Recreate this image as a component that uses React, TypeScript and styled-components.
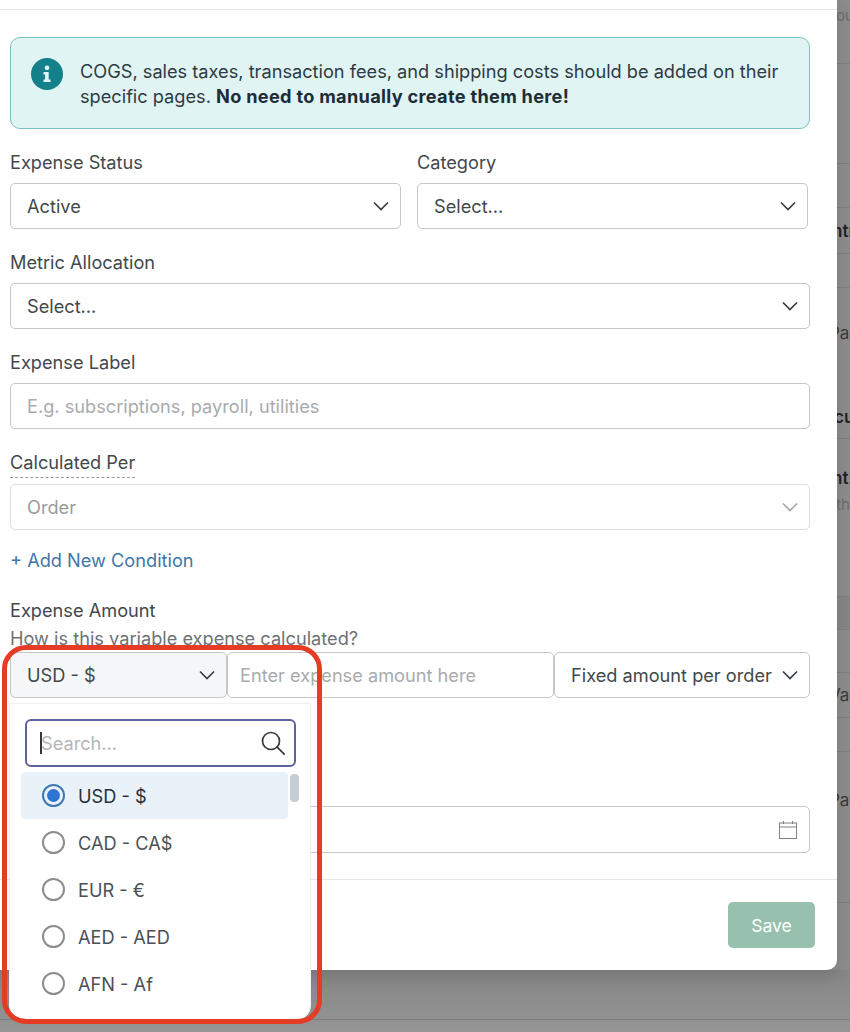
import React from "react";
import styled, { createGlobalStyle } from "styled-components";

const GlobalStyle = createGlobalStyle`
  html, body {
    margin: 0;
    padding: 0;
    background: #8f8f8f;
  }
  * {
    box-sizing: border-box;
  }
`;

const Page = styled.div`
  width: 850px;
  height: 1032px;
  overflow: hidden;
  position: relative;
  display: flex;
  flex-direction: column;
  font-family: Inter, "Liberation Sans", sans-serif;
  font-size: 18.2px;
  color: #42484c;
  background: #8f8f8f;
`;

const TopArea = styled.div`
  display: flex;
  height: 970px;
`;

const Modal = styled.div`
  width: 837px;
  flex: none;
  background: #fff;
  border-bottom-right-radius: 10px;
  box-shadow: 0 6px 16px rgba(0, 0, 0, 0.12);
  display: flex;
  flex-direction: column;
  position: relative;
  z-index: 1;
`;

const ModalHeader = styled.div`
  height: 10px;
  flex: none;
  border-bottom: 1px solid #e4e6e8;
`;

const ModalBody = styled.div`
  flex: 1;
  padding: 27px 27px 0 10px;
  display: flex;
  flex-direction: column;
  border-bottom: 1px solid #e4e6e8;
`;

const ModalFooter = styled.div`
  height: 90px;
  flex: none;
  display: flex;
  justify-content: flex-end;
  padding: 22px 22px 0 0;
`;

const SaveButton = styled.button`
  width: 87px;
  height: 46px;
  border: none;
  border-radius: 5px;
  background: #97c1ae;
  color: #fff;
  font: inherit;
  font-size: 17.5px;
`;

const Banner = styled.div`
  height: 92px;
  border: 1px solid #7dc0c1;
  border-radius: 10px;
  background: #e0f4f3;
  display: flex;
  align-items: flex-start;
  gap: 17px;
  padding: 21px 20px 0;
  line-height: 25px;
  color: #2d3a44;
`;

const BannerIcon = styled.svg`
  flex: none;
  width: 32px;
  height: 32px;
  margin-top: -1px;
`;

const BannerStrong = styled.strong`
  font-weight: 700;
  letter-spacing: 0.29px;
  color: #1e2c38;
`;

const TwoColumns = styled.div`
  display: grid;
  grid-template-columns: 391px 391px;
  gap: 16px;
  margin-top: 22px;
`;

const Field = styled.div<{ $top?: number }>`
  display: flex;
  flex-direction: column;
  margin-top: ${(p) => p.$top ?? 0}px;
`;

const Label = styled.label`
  height: 24px;
  line-height: 22px;
  margin-bottom: 8px;
`;

const TipLabel = styled.label`
  align-self: flex-start;
  height: 28px;
  line-height: 24px;
  margin-bottom: 6px;
  border-bottom: 1px dashed #9a9a9a;
`;

const Box = styled.div<{ $disabled?: boolean; $grey?: boolean }>`
  height: 46px;
  border: 1px solid ${(p) => (p.$disabled ? "#dcdedf" : "#c4c6c8")};
  border-radius: 5px;
  padding: 0 9px 0 16px;
  display: flex;
  align-items: center;
  justify-content: space-between;
  white-space: nowrap;
  background: ${(p) => (p.$grey ? "#f5f6f8" : "#fff")};
  color: ${(p) => (p.$disabled ? "#9a9c9e" : "inherit")};
`;

const AmountInput = styled(Box)`
  padding-left: 12px;
`;

const Placeholder = styled.span`
  color: #a9abad;
`;

const Chevron = styled.svg<{ $faded?: boolean }>`
  flex: none;
  width: 20px;
  height: 20px;
  fill: none;
  stroke: ${(p) => (p.$faded ? "#a4a6a8" : "#383e42")};
  stroke-width: 1.7;
`;

const AddLink = styled.a`
  margin-top: 18px;
  height: 25px;
  line-height: 25px;
  color: #3f76a8;
`;

const AmountTitle = styled.div`
  margin-top: 25px;
  height: 24px;
  line-height: 24px;
`;

const AmountHint = styled.div`
  height: 24px;
  line-height: 24px;
  margin-top: 4px;
  margin-bottom: 2px;
  color: #6d7276;
`;

const AmountRow = styled.div`
  display: grid;
  grid-template-columns: 217px 327px 256px;
  height: 46px;
`;

const DateBox = styled(Box)`
  margin-top: 108px;
  justify-content: flex-end;
  padding-right: 11px;
  height: 47px;
`;

const CalendarIcon = styled.svg`
  width: 20px;
  height: 20px;
  fill: none;
  stroke: #808284;
  stroke-width: 1;
`;

const Menu = styled.div`
  position: absolute;
  left: 9px;
  top: 703px;
  width: 302px;
  height: 317px;
  background: #fff;
  border: 1px solid #f0f1f2;
  border-radius: 0 0 14px 14px;
  z-index: 2;
  padding: 15px 0 0 11px;
`;

const SearchBox = styled.div`
  width: 271px;
  height: 48px;
  margin-left: 4px;
  border: 2px solid #5c639f;
  border-radius: 6px;
  display: flex;
  align-items: center;
  padding: 0 8px 0 13px;
`;

const Caret = styled.span`
  width: 2px;
  height: 22px;
  background: #33383c;
  flex: none;
`;

const SearchHint = styled.span`
  flex: 1;
  margin-left: -1px;
  color: #b4b6b8;
`;

const SearchIcon = styled.svg`
  width: 26px;
  height: 26px;
  fill: none;
  stroke: #33383c;
  stroke-width: 1.7;
  stroke-linecap: round;
`;

const OptionList = styled.div`
  margin-top: 5px;
  position: relative;
`;

const Option = styled.div<{ $active?: boolean }>`
  width: 267px;
  height: 47px;
  display: flex;
  align-items: center;
  gap: 13px;
  padding-left: 21px;
  border-radius: 4px;
  background: ${(p) => (p.$active ? "#eaf2f9" : "transparent")};
  color: ${(p) => (p.$active ? "#283038" : "#4b5054")};
`;

const Radio = styled.span<{ $active?: boolean }>`
  width: 23px;
  height: 23px;
  flex: none;
  border-radius: 50%;
  border: 2px solid ${(p) => (p.$active ? "#3f78b4" : "#8b8d8f")};
  display: flex;
  align-items: center;
  justify-content: center;

  &::after {
    content: "";
    width: 13px;
    height: 13px;
    border-radius: 50%;
    background: ${(p) => (p.$active ? "#2f74d0" : "transparent")};
  }
`;

const ScrollThumb = styled.div`
  position: absolute;
  right: 11px;
  top: 2px;
  width: 9px;
  height: 28px;
  border-radius: 4px;
  background: #c5cdd6;
`;

const Annotation = styled.div`
  position: absolute;
  left: 2px;
  top: 645px;
  width: 320px;
  height: 379px;
  border: 5px solid #e63b24;
  border-radius: 24px;
  z-index: 3;
  pointer-events: none;
`;

const Strip = styled.div`
  flex: 1;
  overflow: hidden;
  display: flex;
  flex-direction: column;
  background: #8c8c8c;
`;

const StripRow = styled.div<{ $h: number; $line?: boolean; $tone?: boolean }>`
  height: ${(p) => p.$h}px;
  flex: none;
  display: flex;
  align-items: center;
  border-bottom: ${(p) => (p.$line ? "1px solid #7e7e7e" : "none")};
  background: ${(p) => (p.$tone ? "#868686" : "transparent")};
  white-space: nowrap;
`;

const StripText = styled.span<{ $shift: number; $bold?: boolean; $faint?: boolean }>`
  margin-left: ${(p) => p.$shift}px;
  font-weight: ${(p) => (p.$bold ? 600 : 400)};
  color: ${(p) => (p.$bold ? "#222" : p.$faint ? "#6b6b6b" : "#3a3a3a")};
  font-size: ${(p) => (p.$faint ? 15 : 17)}px;
`;

const BottomArea = styled.div`
  flex: 1;
  display: flex;
  flex-direction: column;
  background: linear-gradient(#858585, #959595);
`;

const BottomLine = styled.div`
  margin-top: 49px;
  height: 1px;
  flex: none;
  background: #7d7d7d;
`;

const stripRows = [
  { h: 30, text: "ou", shift: -1, faint: true },
  { h: 34, line: true },
  { h: 100, line: true },
  { h: 44, line: true },
  { h: 46, text: "ntr", shift: -5, bold: true, line: true },
  { h: 34, line: true },
  { h: 90, text: "Pa", shift: -8 },
  { h: 17 },
  { h: 44, text: "cu", shift: -3, bold: true, line: true },
  { h: 26 },
  { h: 26, text: "nt", shift: -5, bold: true },
  { h: 26, text: "th", shift: -1, faint: true },
  { h: 80, line: true },
  { h: 33, line: true, tone: true },
  { h: 43, line: true },
  { h: 45, text: "Va", shift: -8, line: true },
  { h: 34, line: true },
  { h: 95, text: "Pa", shift: -8 },
  { h: 56, line: true },
];

const currencies = ["USD - $", "CAD - CA$", "EUR - €", "AED - AED", "AFN - Af"];

const ChevronDown = ({ faded }: { faded?: boolean }) => (
  <Chevron $faded={faded} viewBox="0 0 20 20">
    <path d="M3 6.5l7 7 7-7" />
  </Chevron>
);

export default function App() {
  return (
    <Page>
      <GlobalStyle />
      <TopArea>
        <Modal>
          <ModalHeader />
          <ModalBody>
            <Banner>
              <BannerIcon viewBox="0 0 32 32">
                <circle cx="16" cy="16" r="16" fill="#13808a" />
                <circle cx="16" cy="9.8" r="2.4" fill="#e0f4f3" />
                <path d="M12.5 14h5.2v7.4h1.8v2.6h-7v-2.6h1.6v-4.8h-1.6z" fill="#e0f4f3" />
              </BannerIcon>
              <div>
                COGS, sales taxes, transaction fees, and shipping costs should be added on their
                specific pages. <BannerStrong>No need to manually create them here!</BannerStrong>
              </div>
            </Banner>

            <TwoColumns>
              <Field>
                <Label>Expense Status</Label>
                <Box>
                  Active
                  <ChevronDown />
                </Box>
              </Field>
              <Field>
                <Label>Category</Label>
                <Box>
                  Select...
                  <ChevronDown />
                </Box>
              </Field>
            </TwoColumns>

            <Field $top={22}>
              <Label>Metric Allocation</Label>
              <Box>
                Select...
                <ChevronDown />
              </Box>
            </Field>

            <Field $top={22}>
              <Label>Expense Label</Label>
              <Box>
                <Placeholder>E.g. subscriptions, payroll, utilities</Placeholder>
              </Box>
            </Field>

            <Field $top={21}>
              <TipLabel>Calculated Per</TipLabel>
              <Box $disabled>
                Order
                <ChevronDown faded />
              </Box>
            </Field>

            <AddLink>+ Add New Condition</AddLink>

            <AmountTitle>Expense Amount</AmountTitle>
            <AmountHint>How is this variable expense calculated?</AmountHint>
            <AmountRow>
              <Box $grey>
                USD - $
                <ChevronDown />
              </Box>
              <AmountInput>
                <Placeholder>Enter expense amount here</Placeholder>
              </AmountInput>
              <Box>
                Fixed amount per order
                <ChevronDown />
              </Box>
            </AmountRow>

            <DateBox>
              <CalendarIcon viewBox="0 0 20 20">
                <rect x="1.5" y="3" width="17" height="15.5" />
                <path d="M1.5 7h17M5.5 1v3M14.5 1v3" />
              </CalendarIcon>
            </DateBox>
          </ModalBody>
          <ModalFooter>
            <SaveButton>Save</SaveButton>
          </ModalFooter>
        </Modal>
        <Strip>
          {stripRows.map((row, i) => (
            <StripRow key={i} $h={row.h} $line={row.line} $tone={row.tone}>
              {row.text && (
                <StripText $shift={row.shift} $bold={row.bold} $faint={row.faint}>
                  {row.text}
                </StripText>
              )}
            </StripRow>
          ))}
        </Strip>
      </TopArea>
      <BottomArea>
        <BottomLine />
      </BottomArea>

      <Menu>
        <SearchBox>
          <Caret />
          <SearchHint>Search...</SearchHint>
          <SearchIcon viewBox="0 0 26 26">
            <circle cx="11" cy="11" r="8.5" />
            <path d="M17.2 17.2l7 7" />
          </SearchIcon>
        </SearchBox>
        <OptionList>
          <ScrollThumb />
          {currencies.map((c, i) => (
            <Option key={c} $active={i === 0}>
              <Radio $active={i === 0} />
              {c}
            </Option>
          ))}
        </OptionList>
      </Menu>
      <Annotation />
    </Page>
  );
}
